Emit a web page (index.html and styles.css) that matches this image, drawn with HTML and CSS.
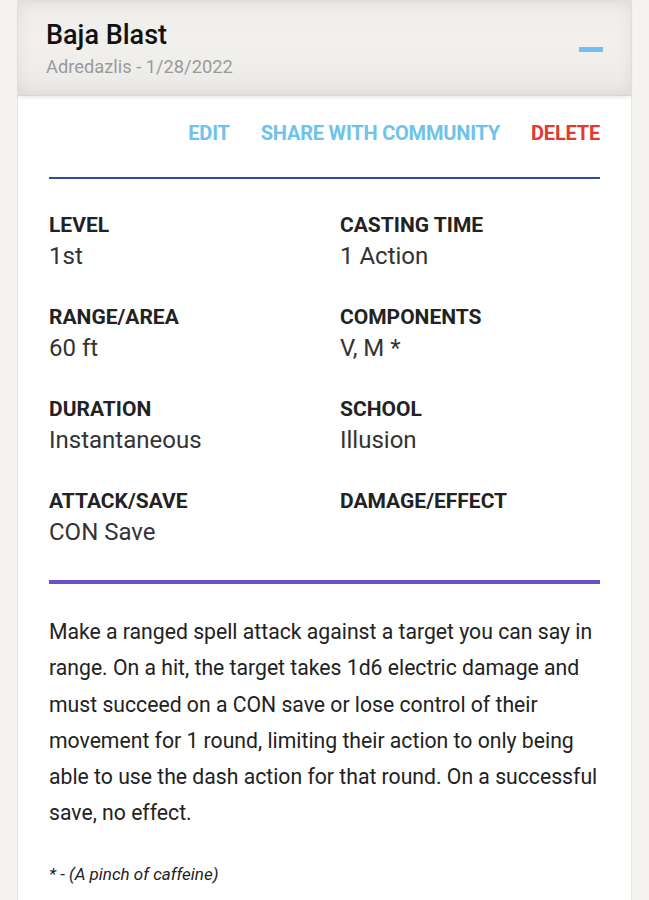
FILE: index.html
```html
<!DOCTYPE html>
<html>
<head>
<meta charset="utf-8">
<link rel="stylesheet" href="styles.css">
</head>
<body>
<div class="page">
  <div class="card">
    <header class="card-head">
      <div class="head-text">
        <h1 class="title">Baja Blast</h1>
        <div class="meta">Adredazlis - 1/28/2022</div>
      </div>
      <span class="collapse" aria-label="collapse"></span>
    </header>
    <div class="card-body">
      <nav class="actions">
        <a class="action">EDIT</a>
        <a class="action">SHARE WITH COMMUNITY</a>
        <a class="action danger">DELETE</a>
      </nav>
      <hr class="rule-blue">
      <div class="stats">
        <div class="stat"><div class="label">LEVEL</div><div class="value">1st</div></div>
        <div class="stat"><div class="label">CASTING TIME</div><div class="value">1 Action</div></div>
        <div class="stat"><div class="label">RANGE/AREA</div><div class="value">60 ft</div></div>
        <div class="stat"><div class="label">COMPONENTS</div><div class="value">V, M *</div></div>
        <div class="stat"><div class="label">DURATION</div><div class="value">Instantaneous</div></div>
        <div class="stat"><div class="label">SCHOOL</div><div class="value">Illusion</div></div>
        <div class="stat"><div class="label">ATTACK/SAVE</div><div class="value">CON Save</div></div>
        <div class="stat"><div class="label">DAMAGE/EFFECT</div><div class="value"></div></div>
      </div>
      <hr class="rule-purple">
      <p class="desc">Make a ranged spell attack against a target you can say in range. On a hit, the target takes 1d6 electric damage and must succeed on a CON save or lose control of their movement for 1 round, limiting their action to only being able to use the dash action for that round. On a successful save, no effect.</p>
      <p class="note">* - (A pinch of caffeine)</p>
    </div>
  </div>
</div>
</body>
</html>
```

FILE: styles.css
```css
html, body {
  margin: 0;
  padding: 0;
}
body {
  background: #f6f4f0;
  font-family: Roboto, "Liberation Sans", sans-serif;
  color: #222;
  width: 649px;
  height: 900px;
  overflow: hidden;
}
.page {
  padding: 0 17px;
}
.card {
  background: #fff;
  border-left: 1px solid #e6e4e0;
  border-right: 1px solid #e6e4e0;
  min-height: 900px;
  box-sizing: border-box;
}
.card-head {
  display: flex;
  align-items: center;
  justify-content: space-between;
  height: 96px;
  box-sizing: border-box;
  padding: 1px 28px 0 28px;
  background: linear-gradient(180deg, #eeedea 0%, #f1f0ed 40%, #efeeeb 70%, #e8e7e3 100%);
  box-shadow: inset 0 0 16px rgba(0,0,0,0.07), 0 2px 3px rgba(0,0,0,0.07);
  border-top: 2px solid #e2e0db;
  border-bottom: 1px solid #d9d6d0;
}
.title {
  margin: 0;
  font-size: 27px;
  font-weight: 500;
  color: #111;
  line-height: 30px;
}
.meta {
  margin-top: 6px;
  font-size: 18.3px;
  color: #9a9a9a;
  line-height: 22px;
}
.collapse {
  width: 24px;
  height: 5px;
  background: #6ec3ee;
  margin-top: 0;
}
.card-body {
  padding: 0 31px 0 31px;
}
.actions {
  display: flex;
  justify-content: flex-end;
  gap: 31px;
  padding-top: 25px;
}
.action {
  font-size: 20px;
  font-weight: 700;
  color: #6ec3ea;
  line-height: 24px;
  letter-spacing: -0.2px;
}
.action.danger {
  color: #e03a31;
}
.rule-blue {
  border: 0;
  height: 2px;
  background: #2d4ea6;
  margin: 32px 0 0 0;
}
.stats {
  display: grid;
  grid-template-columns: 291px 1fr;
  row-gap: 32px;
  padding-top: 33px;
}
.stat {
  min-height: 60px;
}
.label {
  font-size: 21px;
  font-weight: 700;
  color: #222;
  line-height: 26px;
}
.value {
  font-size: 24px;
  color: #333;
  line-height: 32px;
  margin-top: 2px;
}
.rule-purple {
  border: 0;
  height: 4px;
  background: #6b4fcb;
  margin: 32px 0 0 0;
}
.desc {
  margin: 30px 0 0 0;
  font-size: 21.2px;
  line-height: 36.3px;
  color: #222;
}
.note {
  margin: 30px 0 0 0;
  font-size: 17px;
  line-height: 24px;
  font-style: italic;
  color: #222;
}
```
